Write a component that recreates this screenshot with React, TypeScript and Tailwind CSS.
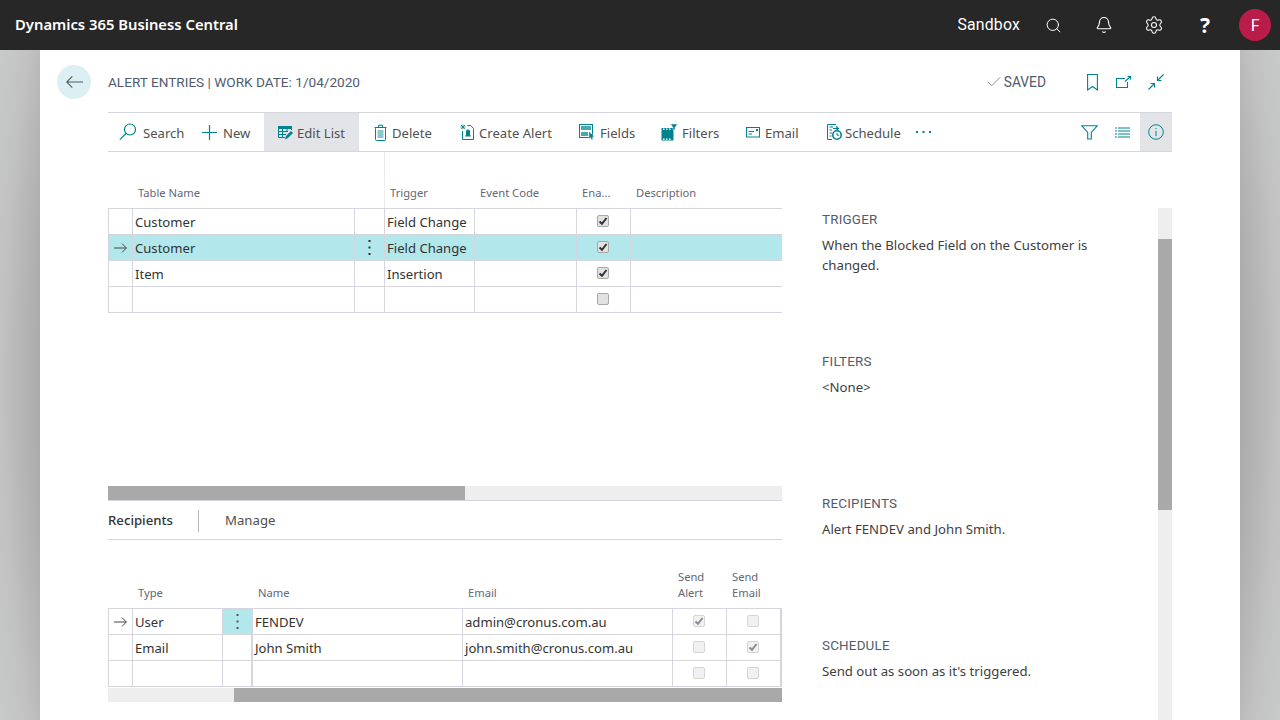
import { Bell, Check, Search, Settings } from "lucide-react";

const sans = "font-['Noto_Sans','Open_Sans',sans-serif]";

function ToolIcon({ name }: { name: string }) {
    const c = "#00838f";
    if (name === "search")
        return (
            <svg width="18" height="18" viewBox="0 0 18 18" fill="none" stroke={c} strokeWidth="1.2">
                <circle cx="11" cy="6.5" r="5.5" />
                <path d="M7 10.5 L0.8 16.7" />
            </svg>
        );
    if (name === "plus")
        return (
            <svg width="15" height="15" viewBox="0 0 15 15" fill="none" stroke={c} strokeWidth="1.2">
                <path d="M7.5 0V15M0 7.5H15" />
            </svg>
        );
    if (name === "edit")
        return (
            <svg width="15" height="15" viewBox="0 0 15 15" fill="none">
                <rect x="0" y="1" width="14" height="3" fill={c} />
                <path d="M0.5 1V12.5H7M4.5 3.5V12.5M9 3.5V7M13.5 3.5V5M0.5 6.5H10M0.5 9.5H8" stroke={c} strokeWidth="1" />
                <path d="M7 14.5L8 11L13 6L15 8L10 13Z" fill={c} />
            </svg>
        );
    if (name === "delete")
        return (
            <svg width="13" height="17" viewBox="0 0 13 17" fill="none" stroke={c} strokeWidth="1">
                <rect x="1.5" y="3.5" width="10" height="13" rx="1" />
                <rect x="3.5" y="6" width="6" height="8" fill={c} opacity="0.45" stroke="none" />
                <path d="M4.5 3.5V1.2H8.5V3.5M0.5 3.5H12.5" />
            </svg>
        );
    if (name === "alert")
        return (
            <svg width="15" height="16" viewBox="0 0 15 16" fill="none">
                <path d="M7.5 1.5H10.5L13.5 4.5V15.5H2.5V7" stroke={c} strokeWidth="1" />
                <path d="M8 5.5C6.5 5.5 6 6.5 6 8V10.5L5 12.5H11L10 10.5V8C10 6.5 9.5 5.5 8 5.5Z" fill={c} />
                <path d="M3 0.5V5.5M0.5 3H5.5M1 1L5 5M5 1L1 5" stroke={c} strokeWidth="0.8" />
            </svg>
        );
    if (name === "fields")
        return (
            <svg width="16" height="16" viewBox="0 0 16 16" fill="none">
                <rect x="0.5" y="0.5" width="13" height="13" stroke={c} />
                <rect x="2" y="2" width="10" height="4" fill={c} opacity="0.7" />
                <rect x="2" y="8" width="7" height="4" fill={c} opacity="0.7" />
                <path d="M10 7.5L15.5 12.5L13 13L14 15.5L12.5 16L11.5 13.5L10 15Z" fill={c} stroke="#fff" strokeWidth="0.4" />
            </svg>
        );
    if (name === "filters")
        return (
            <svg width="17" height="17" viewBox="0 0 17 17" fill="none">
                <rect x="0.5" y="4" width="12" height="12.5" fill={c} />
                <rect x="2" y="4.5" width="1.5" height="1.5" fill="#fff" />
                <rect x="5" y="4.5" width="1.5" height="1.5" fill="#fff" />
                <rect x="8" y="4.5" width="1.5" height="1.5" fill="#fff" />
                <rect x="2" y="14.5" width="1.5" height="1.5" fill="#fff" />
                <rect x="5" y="14.5" width="1.5" height="1.5" fill="#fff" />
                <rect x="8" y="14.5" width="1.5" height="1.5" fill="#fff" />
                <path d="M9.5 0H16.5L14 3.5V6H12V3.5Z" fill={c} stroke="#fff" strokeWidth="0.5" />
            </svg>
        );
    if (name === "email")
        return (
            <svg width="14" height="11" viewBox="0 0 14 11" fill="none" stroke={c} strokeWidth="1">
                <rect x="0.5" y="0.5" width="13" height="9.5" />
                <path d="M2.5 4.5H8M2.5 7H6" />
                <rect x="10" y="2" width="2" height="2" fill={c} stroke="none" />
            </svg>
        );
    if (name === "schedule")
        return (
            <svg width="15" height="16" viewBox="0 0 15 16" fill="none">
                <path d="M9 0.5H0.5V15.5H5" stroke={c} strokeWidth="1" />
                <path d="M2.5 3H6M2.5 6H5M2.5 9H5M2.5 12H4.5" stroke={c} strokeWidth="1" />
                <path d="M6 4.5H11M9 2.5L11.5 4.5L9 6.5" stroke={c} strokeWidth="1.2" />
                <circle cx="10" cy="11" r="4.2" stroke={c} strokeWidth="1.6" />
                <path d="M10 9V11.2H12" stroke={c} strokeWidth="1" />
            </svg>
        );
    return null;
}

const actions = [
    { label: "Search", icon: "search", box: "w-[87px] pl-[11px] gap-[6px]" },
    { label: "New", icon: "plus", box: "w-[69px] pl-[7px] gap-[6px]" },
    { label: "Edit List", icon: "edit", box: "w-[95px] pl-[14px] gap-[4px] bg-[#e3e4e8]" },
    { label: "Delete", icon: "delete", box: "w-[86px] pl-[15px] gap-[5px]" },
    { label: "Create Alert", icon: "alert", box: "w-[119px] pl-[15px] gap-[4px]" },
    { label: "Fields", icon: "fields", box: "w-[82px] pl-[15px] gap-[5px]" },
    { label: "Filters", icon: "filters", box: "w-[85px] pl-[15px] gap-[4px]" },
    { label: "Email", icon: "email", box: "w-[82px] pl-[15px] gap-[5px]" },
    { label: "Schedule", icon: "schedule", box: "w-[89px] pl-[14px] gap-[3px]" },
];

const infoBlocks = [
    { title: "TRIGGER", text: "When the Blocked Field on the Customer is changed." },
    { title: "FILTERS", text: "<None>" },
    { title: "RECIPIENTS", text: "Alert FENDEV and John Smith." },
    { title: "SCHEDULE", text: "Send out as soon as it's triggered." },
];

const alertRows = [
    { table: "Customer", trigger: "Field Change", enabled: true, active: false },
    { table: "Customer", trigger: "Field Change", enabled: true, active: true },
    { table: "Item", trigger: "Insertion", enabled: true, active: false },
    { table: "", trigger: "", enabled: false, active: false },
];

const recipientRows = [
    { type: "User", name: "FENDEV", email: "admin@cronus.com.au", alert: true, send: false, active: true },
    { type: "Email", name: "John Smith", email: "john.smith@cronus.com.au", alert: false, send: true, active: false },
    { type: "", name: "", email: "", alert: false, send: false, active: false },
];

function Box({ checked, faded }: { checked: boolean; faded?: boolean }) {
    return (
        <span
            className={
                "mb-[1px] mr-[2px] flex h-[12px] w-[12px] items-center justify-center rounded-[2px] border " +
                (faded ? "border-[#d4d4d4] bg-[#f1f1f1]" : "border-[#a8a8a8] bg-[#e2e2e2]")
            }
        >
            {checked && (
                <svg width="10" height="10" viewBox="0 0 10 10" fill="none" stroke={faded ? "#8c8c8c" : "#333"} strokeWidth="2">
                    <path d="M1.5 5.5L4 7.8L8.5 2" />
                </svg>
            )}
        </span>
    );
}

function RowArrow() {
    return (
        <svg width="13" height="10" viewBox="0 0 13 10" fill="none" stroke="#444" strokeWidth="1">
            <path d="M0 5H12.3M8 .6L12.4 5L8 9.4" />
        </svg>
    );
}

function RowDots({ color }: { color: string }) {
    return (
        <svg width="3" height="15" viewBox="0 0 3 15" fill={color}>
            <rect x="0.5" y="0" width="2" height="2" />
            <rect x="0.5" y="6.5" width="2" height="2" />
            <rect x="0.5" y="13" width="2" height="2" />
        </svg>
    );
}

const cell = "flex h-[26px] items-center border-r border-b border-[#d5d5dd] text-[13.1px] text-[#333] overflow-hidden whitespace-nowrap";
const label = "pt-[3px]";

export default function App() {
    return (
        <div className={"flex h-[720px] flex-col overflow-hidden " + sans}>
            {/* Top bar */}
            <header className="flex h-[50px] shrink-0 items-center bg-[#272727] pl-[15px] pr-[9px] text-white">
                <span className="pb-[2px] text-[14.8px] font-semibold">Dynamics 365 Business Central</span>
                <div className="ml-auto flex items-center">
                    <span className="font-['Roboto',sans-serif] text-[15.8px] tracking-[0.2px]">Sandbox</span>
                    <Search className="ml-[25px] h-[17px] w-[17px]" strokeWidth={1.4} />
                    <Bell className="ml-[33px] h-[18px] w-[18px]" strokeWidth={1.5} />
                    <Settings className="ml-[31px] h-[20px] w-[20px]" strokeWidth={1.3} />
                    <span className="ml-[33px] w-[16px] text-center text-[21px] font-bold leading-none">?</span>
                    <span className="ml-[26px] flex h-[32px] w-[32px] items-center justify-center rounded-full bg-[#b91c48] text-[17px]">F</span>
                </div>
            </header>

            {/* Page */}
            <div className="flex min-h-0 flex-1 bg-[radial-gradient(ellipse_666px_1210px_at_center,#a8a8a8_0%,#aaaaaa_90%,#c2c2c2_96%,#c8caca_100%)] px-10">
                <main className="flex min-w-0 flex-1 flex-col bg-white pr-[68px]">
                    <div className="flex h-[62px] shrink-0 items-center pl-[17px] pt-[2px]">
                        <span className="flex h-[34px] w-[34px] items-center justify-center rounded-full bg-[#dceff3]">
                            <svg width="17" height="12" viewBox="0 0 17 12" fill="none" stroke="#505a68" strokeWidth="1.1">
                                <path d="M0.8 6H17M6.3 .4L0.7 6L6.3 11.6" />
                            </svg>
                        </span>
                        <h1 className="ml-[17px] font-['Roboto',sans-serif] text-[13.6px] text-[#505c6d]">
                            ALERT ENTRIES | WORK DATE: 1/04/2020
                        </h1>
                        <div className="ml-auto flex items-center">
                            <Check className="h-[18px] w-[18px] text-[#505c6d]" strokeWidth={0.9} />
                            <span className="ml-[1px] font-['Roboto',sans-serif] text-[13.8px] text-[#505c6d]">SAVED</span>
                            <svg className="ml-[41px]" width="11" height="17" viewBox="0 0 11 17" fill="none" stroke="#00838f" strokeWidth="1.1">
                                <path d="M.6 .5H10.4V16L5.5 12.5L.6 16Z" />
                            </svg>
                            <svg className="ml-[18px]" width="15" height="12" viewBox="0 0 15 12" fill="none" stroke="#00838f" strokeWidth="1.1">
                                <path d="M9 2.5H.5V11.5H11.5V6M9 5.5L14.5 .5M11.5 .5H14.5V3.5" />
                            </svg>
                            <svg className="ml-[17px] mr-[8px]" width="16" height="16" viewBox="0 0 16 16" fill="none" stroke="#00838f" strokeWidth="1.1">
                                <path d="M15.5 .5L9.5 6.5M9.5 2.5V6.5H13.5M.5 15.5L6.5 9.5M2.5 9.5H6.5V13.5" />
                            </svg>
                        </div>
                    </div>

                    <div className="ml-[68px] flex h-[40px] shrink-0 border-y border-[#d5d5dd] text-[13.1px] text-[#505050]">
                        {actions.map((a) => (
                            <div key={a.label} className={"flex h-full items-center " + a.box}>
                                <ToolIcon name={a.icon} />
                                <span className={label}>{a.label}</span>
                            </div>
                        ))}
                        <svg className="ml-[14px] self-center" width="15" height="2" viewBox="0 0 15 2" fill="#00838f">
                            <rect x="0" y="0" width="2" height="2" />
                            <rect x="6.5" y="0" width="2" height="2" />
                            <rect x="13" y="0" width="2" height="2" />
                        </svg>
                        <div className="ml-auto flex items-center">
                            <svg width="17" height="15" viewBox="0 0 17 15" fill="none" stroke="#00838f" strokeWidth="1.1">
                                <path d="M.8.8H16.2L10.3 7.5V14H6.7V7.5Z" />
                            </svg>
                            <svg className="ml-[17px]" width="15" height="11" viewBox="0 0 15 11" fill="none" stroke="#00838f" strokeWidth="1.1">
                                <path d="M0 1H2M3 1H15M0 4H2M3 4H15M0 7H2M3 7H15M0 10H2M3 10H15" />
                            </svg>
                            <div className="ml-[10px] flex h-full w-[32px] items-center justify-center bg-[#e3e4e8]">
                                <svg width="16" height="16" viewBox="0 0 16 16" fill="none" stroke="#00838f" strokeWidth="1">
                                    <circle cx="8" cy="8" r="7.3" />
                                    <path d="M8 7V12.2M8 4V5.2" />
                                </svg>
                            </div>
                        </div>
                    </div>

                    <div className="flex min-h-0 flex-1 pl-[68px]">
                        {/* Lists */}
                        <div className="flex w-[674px] shrink-0 flex-col">
                            <div className="grid h-[56px] grid-cols-[25px_222px_30px_90px_102px_54px_151px] text-[11.2px] text-[#5f6875]">
                                <span className="col-span-2 self-end pb-[6px] pl-[30px]">Table Name</span>
                                <span className="border-r border-[#ececec]" />
                                <span className="self-end pb-[6px] pl-[5px]">Trigger</span>
                                <span className="self-end pb-[6px] pl-[5px]">Event Code</span>
                                <span className="self-end pb-[6px] pl-[5px]">Ena...</span>
                                <span className="self-end pb-[6px] pl-[5px]">Description</span>
                            </div>
                            <div className="grid grid-cols-[25px_222px_30px_90px_102px_54px_151px] border-t border-[#d5d5dd]">
                                {alertRows.map((r, i) => {
                                    const tint = r.active ? " bg-[#b2e8ec]" : "";
                                    return [
                                        <div key={i + "a"} className={cell + tint + " justify-center border-l"}>
                                            {r.active && <RowArrow />}
                                        </div>,
                                        <div key={i + "b"} className={cell + tint + " pl-[2px] pt-[2px]"}>{r.table}</div>,
                                        <div key={i + "c"} className={cell + tint + " justify-center"}>
                                            {r.active && <RowDots color="#333" />}
                                        </div>,
                                        <div key={i + "d"} className={cell + tint + " pl-[2px] pt-[2px]"}>{r.trigger}</div>,
                                        <div key={i + "e"} className={cell + tint} />,
                                        <div key={i + "f"} className={cell + tint + " justify-center"}><Box checked={r.enabled} /></div>,
                                        <div key={i + "g"} className={cell + tint + " border-r-0"} />,
                                    ];
                                })}
                            </div>
                            <div className="mt-[173px] flex h-[15px] shrink-0 border-b border-[#d5d5dd] bg-[#eeeeee]">
                                <div className="h-full w-[357px] bg-[#a9a9a9]" />
                            </div>
                            <div className="flex h-[39px] shrink-0 items-center border-b border-[#d5d5dd] pt-[2px] text-[13.2px] text-[#333]">
                                <span className="font-medium">Recipients</span>
                                <span className="ml-[25px] h-[22px] w-px bg-[#b5b5b5]" />
                                <span className="ml-[26px] text-[#505050]">Manage</span>
                            </div>
                            <div className="grid h-[68px] shrink-0 grid-cols-[25px_90px_30px_210px_210px_54px_55px] items-end pb-[7px] text-[11.2px] leading-[16px] text-[#5f6875]">
                                <span />
                                <span className="pl-[5px]">Type</span>
                                <span />
                                <span className="pl-[5px]">Name</span>
                                <span className="pl-[5px]">Email</span>
                                <span className="pl-[5px]">Send<br />Alert</span>
                                <span className="pl-[5px]">Send<br />Email</span>
                            </div>
                            <div className="grid w-[674px] grid-cols-[25px_90px_30px_210px_210px_54px_55px] border-t border-[#d5d5dd]">
                                {recipientRows.map((r, i) => [
                                    <div key={i + "a"} className={cell + " justify-center border-l"}>
                                        {r.active && <RowArrow />}
                                    </div>,
                                    <div key={i + "b"} className={cell + " pl-[2px] pt-[2px]"}>{r.type}</div>,
                                    <div key={i + "c"} className={cell + " justify-center border-r-2" + (r.active ? " bg-[#b2e8ec]" : "")}>
                                        {r.active && <RowDots color="#555" />}
                                    </div>,
                                    <div key={i + "d"} className={cell + " pl-[2px] pt-[2px]"}>{r.name}</div>,
                                    <div key={i + "e"} className={cell + " pl-[2px] pt-[2px]"}>{r.email}</div>,
                                    <div key={i + "f"} className={cell + " justify-center"}><Box checked={r.alert} faded /></div>,
                                    <div key={i + "g"} className={cell + " justify-center border-r-2"}><Box checked={r.send} faded /></div>,
                                ])}
                            </div>
                            <div className="mt-[1px] flex h-[14px] shrink-0 bg-[#eeeeee]">
                                <div className="ml-[126px] h-full flex-1 bg-[#a9a9a9]" />
                            </div>
                        </div>

                        {/* Details */}
                        <aside className="ml-[40px] flex min-w-0 flex-1 pt-[56px]">
                            <div className="min-w-0 flex-1">
                                {infoBlocks.map((b) => (
                                    <section key={b.title} className="h-[142px] pr-[50px] pt-[2px]">
                                        <h2 className="font-['Roboto',sans-serif] text-[13.4px] leading-[20px] tracking-[0.2px] text-[#505c6d]">{b.title}</h2>
                                        <p className="mt-[5px] text-[13.2px] leading-[20px] text-[#404040]">{b.text}</p>
                                    </section>
                                ))}
                            </div>
                            <div className="flex w-[14px] shrink-0 flex-col bg-[#eeeeee] pt-[31px]">
                                <div className="h-[271px] bg-[#a9a9a9]" />
                            </div>
                        </aside>
                    </div>
                </main>
            </div>
        </div>
    );
}
